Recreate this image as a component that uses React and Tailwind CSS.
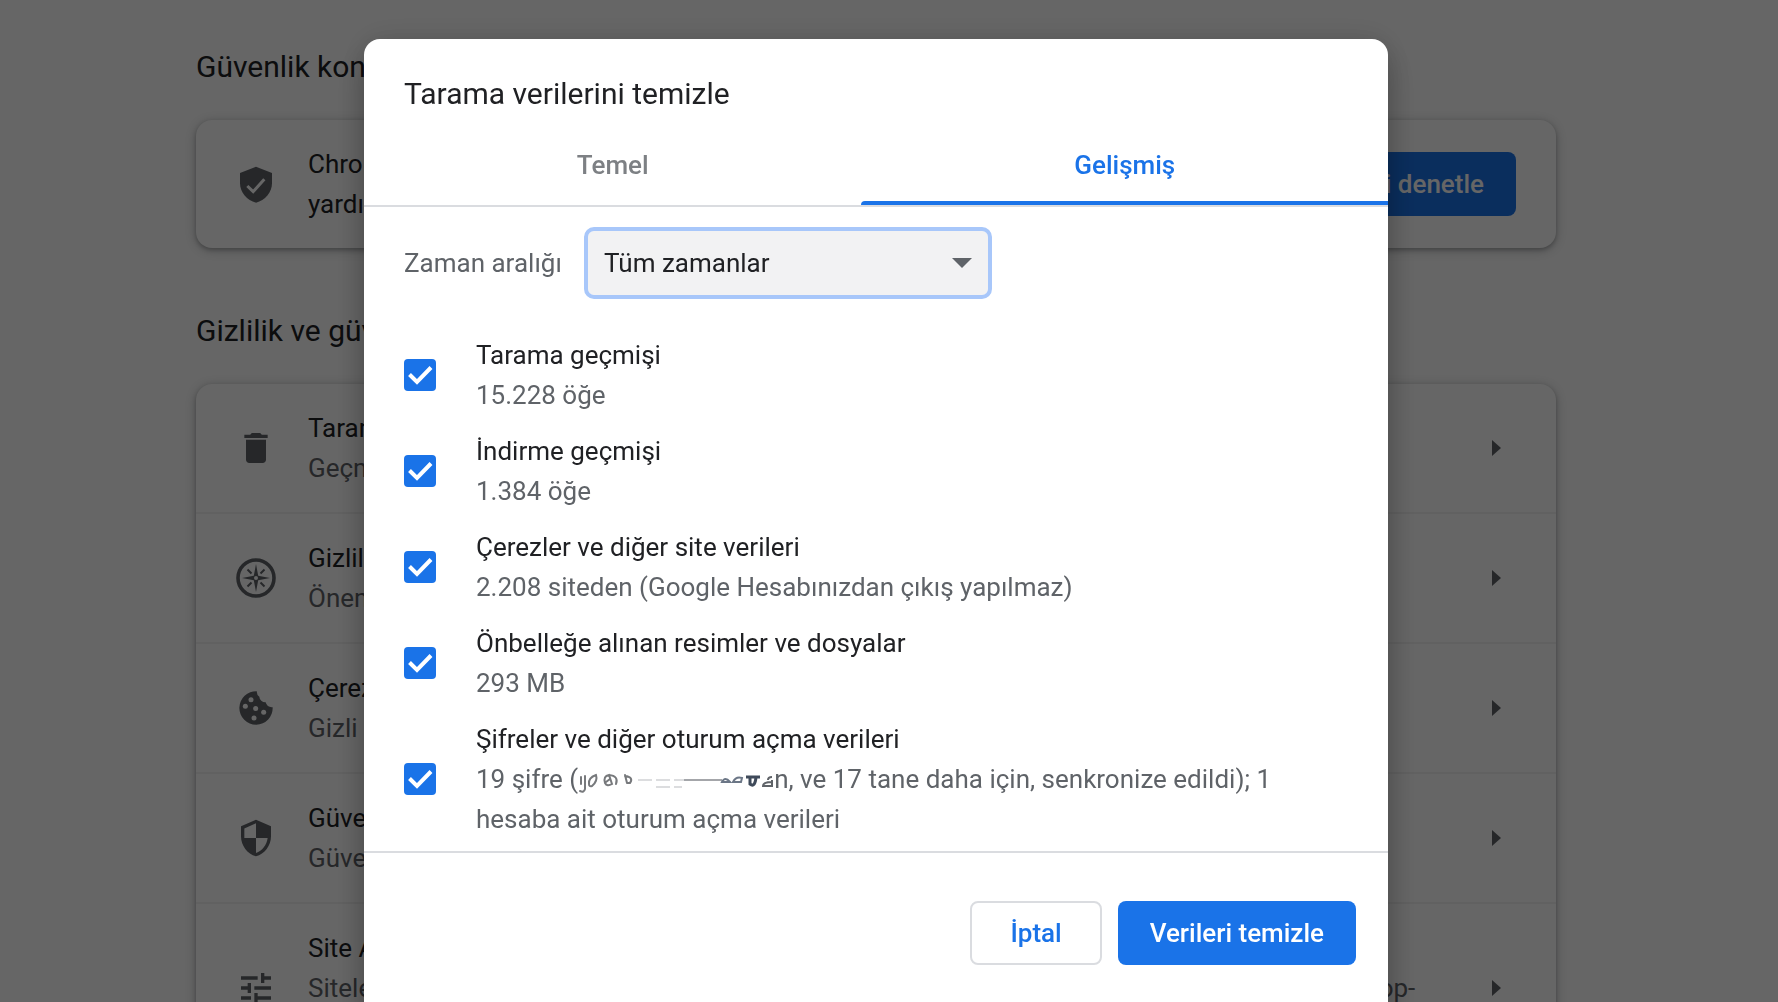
import { useState } from "react";

function ShieldCheckIcon() {
  return (
    <svg viewBox="0 0 24 24" className="size-10 shrink-0 fill-[#5f6368]" aria-hidden="true">
      <path d="M12 1.600 2.400 5.400V11.500C2.400 17 6.600 21.800 12 23.200C17.400 21.800 21.600 17 21.600 11.500V5.400Z" />
      <path d="M6.800 13.200 10.300 16.600 17 9.200" fill="none" stroke="#fff" strokeWidth="1.800" />
    </svg>
  );
}

function TrashIcon() {
  return (
    <svg viewBox="0 0 24 24" className="size-10 shrink-0 fill-[#5f6368]" aria-hidden="true">
      <path d="M6 19c0 1.100.9 2 2 2h8c1.100 0 2-.9 2-2V7H6v12zM19 4h-3.500l-1-1h-5l-1 1H5v2h14V4z" />
    </svg>
  );
}

function CompassIcon() {
  return (
    <svg viewBox="0 0 40 40" className="size-10 shrink-0 fill-[#5f6368]" aria-hidden="true">
      <circle cx="20" cy="20" r="18" fill="none" stroke="#5f6368" strokeWidth="3.600" />
      <path
        fillRule="evenodd"
        d="M20 6 22.200 17.800 34 20 22.200 22.200 20 34 17.800 22.200 6 20 17.800 17.800Z M20 18a2 2 0 1 0 0 4a2 2 0 0 0 0-4Z"
      />
      <path
        d="M11.500 11.500 15.500 15.500M28.500 11.500 24.500 15.500M11.500 28.500 15.500 24.500M28.500 28.500 24.500 24.500"
        stroke="#5f6368"
        strokeWidth="2"
      />
    </svg>
  );
}

function CookieIcon() {
  return (
    <svg viewBox="0 0 24 24" className="size-10 shrink-0 fill-[#5f6368]" aria-hidden="true">
      <path d="M12.500 2A10 10 0 1 0 22 11.500A4 4 0 0 1 17.800 8.600A3.600 3.600 0 0 1 14 5.200A3.500 3.500 0 0 1 12.500 2Z" />
      <g fill="#fff">
        <circle cx="9" cy="7" r="1.500" />
        <circle cx="5.600" cy="11" r="1.500" />
        <circle cx="11.800" cy="12.300" r="1.500" />
        <circle cx="16.600" cy="14.500" r="1.500" />
        <circle cx="10.800" cy="18" r="1.500" />
      </g>
    </svg>
  );
}

function ShieldIcon() {
  return (
    <svg viewBox="0 0 24 24" className="size-10 shrink-0 fill-[#5f6368]" aria-hidden="true">
      <path d="M12 1L3 5v6c0 5.550 3.840 10.740 9 12 5.160-1.260 9-6.450 9-12V5l-9-4zm0 10.990h7c-.53 4.120-3.280 7.790-7 8.940V12H5V6.300l7-3.110v8.800z" />
    </svg>
  );
}

function TuneIcon() {
  return (
    <svg viewBox="0 0 24 24" className="size-10 shrink-0 fill-[#5f6368]" aria-hidden="true">
      <path d="M3 17v2h6v-2H3zM3 5v2h10V5H3zm10 16v-2h8v-2h-8v-2h-2v6h2zM7 9v2H3v2h4v2h2V9H7zm14 4v-2H11v2h10zm-6-4h2V7h4V5h-4V3h-2v6z" />
    </svg>
  );
}

// smudge drawn over the account name
function Redacted() {
  return (
    <svg viewBox="0 0 196 32" className="inline-block h-8 w-[196px] align-middle" fill="none" aria-hidden="true">
      <g stroke="#77797c" strokeWidth="2" strokeLinecap="round">
        <path d="M3 12V19M7 11V24Q6 28 2 26" />
        <path d="M11 19Q10 13 18 10Q20 16 14 21Q11 22 11 19Z" />
        <path d="M27 18Q25 11 31 10L34 19Q29 22 27 18ZM31 10Q41 11 38 19M32 14L28 17" />
        <path d="M47 10 49 18M47 11Q56 12 52 18L49 18" />
      </g>
      <path d="M60 15H112M78 22H104" stroke="#dcdddf" strokeWidth="2" strokeDasharray="14 4" />
      <path d="M106 15H144" stroke="#a4a6aa" strokeWidth="2" />
      <g stroke="#6b7686" strokeWidth="2">
        <path d="M144 17Q147 11 152 17ZM155 17Q158 11 164 13L163 17Z" />
      </g>
      <path d="M168 12H182M172 12V19Q177 23 178 12" stroke="#3f4a5a" strokeWidth="3" />
      <path d="M194 12Q190 12 190 15M194 15V21H185Q185 17 194 17" stroke="#5f6368" strokeWidth="2" />
    </svg>
  );
}

const settings = [
  { Icon: TrashIcon, title: "Tarama verilerini temizle", text: "Geçmişi, çerezleri, önbelleği ve daha fazlasını temizleyin" },
  { Icon: CompassIcon, title: "Gizlilik Rehberi", text: "Önemli gizlilik ve güvenlik denetimlerini inceleyin" },
  { Icon: CookieIcon, title: "Çerezler ve diğer site verileri", text: "Gizli modda üçüncü taraf çerezleri engellendi" },
  { Icon: ShieldIcon, title: "Güvenlik", text: "Güvenli Tarama ve diğer güvenlik ayarları" },
  {
    Icon: TuneIcon,
    title: "Site Ayarları",
    text: "Sitelerin hangi bilgileri kullanabileceğini ve gösterebileceğini kontrol eder (konum, mikrofon, pop-up'lar ve daha fazlası)",
  },
];

const dataTypes = [
  { id: "history", title: "Tarama geçmişi", detail: "15.228 öğe" },
  { id: "downloads", title: "İndirme geçmişi", detail: "1.384 öğe" },
  { id: "cookies", title: "Çerezler ve diğer site verileri", detail: "2.208 siteden (Google Hesabınızdan çıkış yapılmaz)" },
  { id: "cache", title: "Önbelleğe alınan resimler ve dosyalar", detail: "293 MB" },
  {
    id: "passwords",
    title: "Şifreler ve diğer oturum açma verileri",
    detail: (
      <>
        19 şifre (<Redacted />n, ve 17 tane daha için, senkronize edildi); 1 hesaba ait oturum açma verileri
      </>
    ),
  },
];

function SettingsPage() {
  return (
    <main className="mx-auto max-w-[1360px] pt-12">
      <h2 className="text-[30px] leading-[38px]">Güvenlik kontrolü</h2>
      <section className="mt-[34px] flex items-center gap-8 rounded-2xl px-10 py-6 shadow-[0_2px_4px_rgba(60,64,67,.3),0_2px_12px_rgba(60,64,67,.3)]">
        <ShieldCheckIcon />
        <p className="flex-1">
          Chrome; veri ihlalleri, zararlı uzantılar ve benzeri sorunlara karşı güvende kalmanıza
          yardımcı olabilir
        </p>
        <button className="h-16 rounded-lg bg-[#1a73e8] px-8 font-medium text-white">Şimdi denetle</button>
      </section>

      <h2 className="mt-16 text-[30px] leading-[38px]">Gizlilik ve güvenlik</h2>
      <section className="mt-[34px] divide-y-2 divide-black/5 rounded-2xl shadow-[0_2px_4px_rgba(60,64,67,.3),0_2px_12px_rgba(60,64,67,.3)]">
        {settings.map(({ Icon, title, text }) => (
          <a key={title} href="#" className="flex items-center gap-8 px-10 py-6">
            <Icon />
            <span className="flex-1">
              <span className="block">{title}</span>
              <span className="block text-[#5f6368]">{text}</span>
            </span>
            <svg viewBox="0 0 40 40" className="size-10 shrink-0 fill-[#5f6368]" aria-hidden="true">
              <path d="M16 12 25 20 16 28Z" />
            </svg>
          </a>
        ))}
      </section>
    </main>
  );
}

function DataTypeRow({ id, title, detail }) {
  const [checked, setChecked] = useState(true);
  return (
    <label htmlFor={id} className="flex items-center gap-10">
      <span className="grid shrink-0">
        <input
          id={id}
          type="checkbox"
          checked={checked}
          onChange={(e) => setChecked(e.target.checked)}
          className="peer col-start-1 row-start-1 size-8 appearance-none rounded-sm border-4 border-[#5f6368] checked:border-0 checked:bg-[#1a73e8]"
        />
        <svg
          viewBox="0 0 32 32"
          className="pointer-events-none invisible col-start-1 row-start-1 size-8 fill-none stroke-white stroke-4 peer-checked:visible"
          aria-hidden="true"
        >
          <path d="M5.500 15.500 13 23 27 8.500" />
        </svg>
      </span>
      <span>
        <span className="block">{title}</span>
        <span className="block text-[#5f6368]">{detail}</span>
      </span>
    </label>
  );
}

function Tab({ label, selected, onSelect }) {
  return (
    <button
      role="tab"
      aria-selected={selected}
      onClick={onSelect}
      className={`flex flex-auto flex-col pt-1 ${selected ? "text-[#1a73e8]" : "text-[#7d8084]"}`}
    >
      <span className="flex flex-1 items-center self-center">{label}</span>
      <span className={`h-1 w-full rounded-tl-sm ${selected ? "bg-[#1a73e8]" : "bg-transparent"}`} />
    </button>
  );
}

function ClearDataDialog() {
  const [tab, setTab] = useState("Gelişmiş");
  return (
    <div
      role="dialog"
      aria-labelledby="dialog-title"
      className="w-full max-w-[1024px] rounded-2xl bg-white shadow-[0_0_32px_rgba(0,0,0,.12),0_16px_32px_rgba(0,0,0,.24)]"
    >
      <h1 id="dialog-title" className="px-10 pt-8 text-[30px] leading-[46px]">
        Tarama verilerini temizle
      </h1>

      <div role="tablist" className="mt-2 flex h-[82px] border-b-2 border-[#dadce0] font-medium">
        {["Temel", "Gelişmiş"].map((label) => (
          <Tab key={label} label={label} selected={tab === label} onSelect={() => setTab(label)} />
        ))}
      </div>

      <div className="px-10 pt-6">
        <div className="flex items-center gap-6">
          <label htmlFor="range" className="w-40 text-[#5f6368]">
            Zaman aralığı
          </label>
          <div className="grid w-[400px] items-center">
            <select
              id="range"
              className="col-start-1 row-start-1 h-16 appearance-none rounded-md bg-[#f2f2f3] px-4 outline-4 outline-[#a8c7fa]"
            >
              <option>Tüm zamanlar</option>
            </select>
            <svg
              viewBox="0 0 20 10"
              className="pointer-events-none col-start-1 row-start-1 mr-4 h-[10px] w-5 justify-self-end fill-[#5f6368]"
              aria-hidden="true"
            >
              <path d="M0 0H20L10 10Z" />
            </svg>
          </div>
        </div>

        <div className="mt-10 flex flex-col gap-4 pb-3">
          {dataTypes.map((item) => (
            <DataTypeRow key={item.id} {...item} />
          ))}
        </div>
      </div>

      <div className="flex justify-end gap-4 border-t-2 border-[#dadce0] px-8 pt-12 pb-20 font-medium">
        <button className="h-16 rounded-lg border-2 border-[#dadce0] px-[38px] text-[#1a73e8]">İptal</button>
        <button className="h-16 rounded-lg bg-[#1a73e8] px-8 text-white">Verileri temizle</button>
      </div>
    </div>
  );
}

export default function App() {
  return (
    <div className="h-screen overflow-hidden bg-white pr-[26px] font-[Roboto,sans-serif] text-[26px] leading-10 text-[#202124]">
      <SettingsPage />
      <div className="fixed inset-0 flex items-start justify-center overflow-hidden bg-black/60 pt-[39px] pr-[26px]">
        <ClearDataDialog />
      </div>
    </div>
  );
}
